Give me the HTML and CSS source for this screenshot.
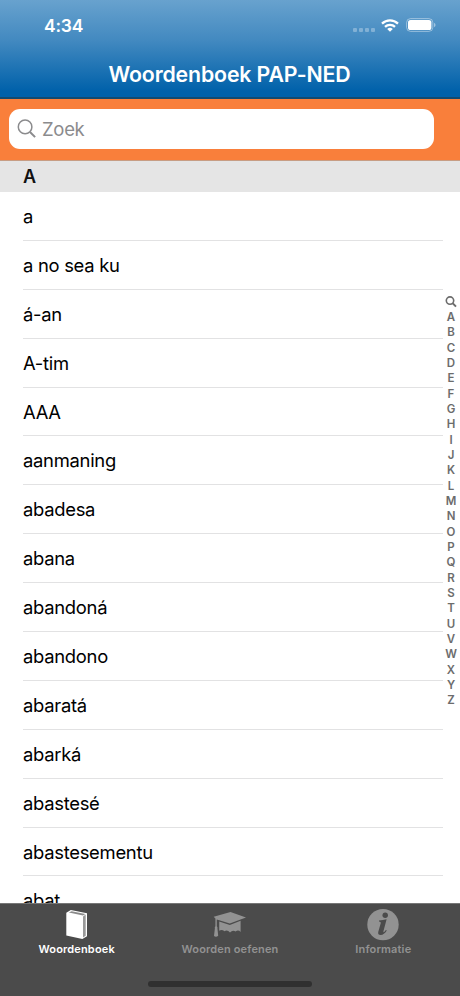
FILE: index.html
```html
<!DOCTYPE html>
<html lang="nl">
<head>
<meta charset="utf-8">
<title>Woordenboek PAP-NED</title>
<link rel="stylesheet" href="styles.css">
</head>
<body>
<div class="app">
  <header class="header">
    <div class="status">
      <span class="time">4:34</span>
      <div class="indicators">
        <span class="signal"><i></i><i></i><i></i><i></i></span>
        <svg class="wifi" width="18" height="13" viewBox="0 0 18 13" fill="none" stroke="#fff" stroke-width="2.3"><path d="M1 4.6a11.6 11.6 0 0 1 16 0M4 7.8a7.2 7.2 0 0 1 10 0"/><path d="M9 12.7L6.2 10a4.2 4.2 0 0 1 5.6 0z" fill="#fff" stroke="none"/></svg>
        <svg class="battery" width="30" height="14" viewBox="0 0 30 14"><rect x=".6" y=".6" width="26.2" height="12.8" rx="4" fill="none" stroke="#fff" stroke-opacity=".42"/><rect x="2" y="2" width="23.4" height="10" rx="2.6" fill="#fff"/><path d="M28 4.8q1.6.7 1.6 2.2t-1.6 2.2z" fill="#fff" opacity=".45"/></svg>
      </div>
    </div>
    <h1 class="title">Woordenboek PAP-NED</h1>
  </header>
  <div class="search">
    <div class="field">
      <svg width="20" height="20" viewBox="0 0 20 20" fill="none" stroke="#8b8b8d" stroke-width="1.5"><circle cx="8.1" cy="7.9" r="6.8"/><path d="M13 13l5.1 5.1" stroke-width="2"/></svg>
      <span class="placeholder">Zoek</span>
    </div>
  </div>
  <main class="content">
    <h2 class="section">A</h2>
    <ul class="words">
      <li>a</li><li>a no sea ku</li><li>á-an</li><li>A-tim</li><li>AAA</li><li>aanmaning</li><li>abadesa</li><li>abana</li><li>abandoná</li><li>abandono</li><li>abaratá</li><li>abarká</li><li>abastesé</li><li>abastesementu</li><li>abat</li>
    </ul>
  </main>
  <nav class="index">
    <span><svg width="12" height="12" viewBox="0 0 12 12" fill="none" stroke="#6c6c6c" stroke-width="1.6"><circle cx="5" cy="4.6" r="3.7"/><path d="M7.8 7.4l3.2 3.2" stroke-width="2"/></svg></span>
    <span>A</span><span>B</span><span>C</span><span>D</span><span>E</span><span>F</span><span>G</span><span>H</span><span>I</span><span>J</span><span>K</span><span>L</span><span>M</span><span>N</span><span>O</span><span>P</span><span>Q</span><span>R</span><span>S</span><span>T</span><span>U</span><span>V</span><span>W</span><span>X</span><span>Y</span><span>Z</span>
  </nav>
  <footer class="tabs">
    <div class="tab active">
      <svg width="36" height="34" viewBox="0 0 36 34"><path d="M7.3 4.8L11.8 2 28 5.2V28.2L23.4 31 7.3 27.4z" fill="#fff"/><path d="M9.8 4.6L12.6 3.2 26.4 6 24 7.6z" fill="#8b8b8b"/><path d="M24 8.4L26.7 6.6V27.8L24 29.4z" fill="#999"/></svg>
      <span>Woordenboek</span>
    </div>
    <div class="tab">
      <svg width="36" height="34" viewBox="0 0 36 34" fill="#929292"><path d="M1.7 8.7L18.5 4 34 9.4 17.8 15.6 4.8 11.4V18.2Q5.8 19 5.4 20.2L6.2 27.8Q4 29.6 2 28L2.9 20.2Q2.4 19 3.4 18.2V10.5z"/><path d="M7.2 13.4L17.8 17 28.6 12.8V23.9Q26.3 21.2 23.6 23.4 20.5 21.5 18 24.6 15.4 21.5 12.5 23.2 9.6 20.8 7.2 22.8z"/></svg>
      <span>Woorden oefenen</span>
    </div>
    <div class="tab">
      <svg width="36" height="34" viewBox="0 0 36 34"><circle cx="18" cy="16.6" r="15.7" fill="#929292"/><circle cx="20.2" cy="7.3" r="2.7" fill="#4b4b4b"/><path d="M14 12.4Q18 12.2 21.6 11.3L18.5 22.9Q18.2 24.6 18.8 24.2 19.6 23.7 20.9 22L21.8 22.6Q19 27 15.7 27 12.5 27 13.3 23.7L15.8 15Q16.1 13.7 14 13.6z" fill="#4b4b4b"/></svg>
      <span>Informatie</span>
    </div>
    <div class="home"></div>
  </footer>
</div>
</body>
</html>
```
FILE: styles.css
```css
* { box-sizing: border-box; }
body { margin: 0; font-family: Inter, "Liberation Sans", sans-serif; background: #fff; }
.app { position: relative; width: 460px; height: 996px; overflow: hidden; display: flex; flex-direction: column; }
.header { flex: none; height: 99px; color: #fff; background: linear-gradient(#68a2ce 0, #4289c0 42%, #0061aa 94%); border-bottom: 2px solid #124a70; }
.status { height: 50px; padding: 2px 24px 0 44px; display: flex; justify-content: space-between; align-items: center; }
.time { font-size: 17.5px; font-weight: 600; line-height: 22px; letter-spacing: -.2px; }
.indicators { display: flex; align-items: center; margin-top: -2px; }
.signal { display: flex; gap: 2px; margin: 10px 6px 0 0; }
.signal i { width: 4px; height: 4px; border-radius: 1px; background: rgba(255,255,255,.3); }
.battery { margin-left: 7px; }
.title { margin: 11.5px 0 0; padding-right: 1px; text-align: center; font-size: 21.3px; font-weight: 600; line-height: 24px; letter-spacing: -.15px; }
.search { flex: none; height: 62px; padding: 10px 26px 11px 9px; background: #f97f3b; border-bottom: 1px solid #c79d84; }
.field { height: 40px; border-radius: 11px; background: #fff; display: flex; align-items: center; padding-left: 9px; }
.field svg { margin-left: -1px; }
.placeholder { margin-left: 5px; color: #8b8b8d; font-size: 18.5px; letter-spacing: -.3px; }
.content { flex: 1; min-height: 0; overflow: hidden; }
.section { margin: 0; height: 31px; line-height: 32px; padding-left: 23px; background: #e5e5e5; color: #111; font-size: 18px; font-weight: 600; }
.words { margin: 0 17px 0 23px; padding: 0; list-style: none; }
.words li { height: 48.9px; line-height: 48.4px; border-bottom: 1px solid #e2e2e3; font-size: 18.4px; letter-spacing: -.28px; color: #000; }
.index { position: absolute; right: 1px; top: 294px; width: 16px; color: #6c6c6c; font-size: 11.5px; font-weight: 600; }
.index span { display: flex; height: 15.33px; align-items: center; justify-content: center; }
.tabs { position: relative; flex: none; height: 93px; background: #4b4b4b; border-top: 1px solid #777; display: grid; grid-template-columns: repeat(3, 1fr); align-items: start; }
.tab { display: flex; flex-direction: column; align-items: center; padding-top: 4px; color: #929292; font-size: 11px; font-weight: 600; line-height: 15px; letter-spacing: .15px; }
.active { color: #fff; }
.home { position: absolute; left: 148px; top: 77px; width: 164px; height: 6px; border-radius: 3px; background: #303030; }
```
